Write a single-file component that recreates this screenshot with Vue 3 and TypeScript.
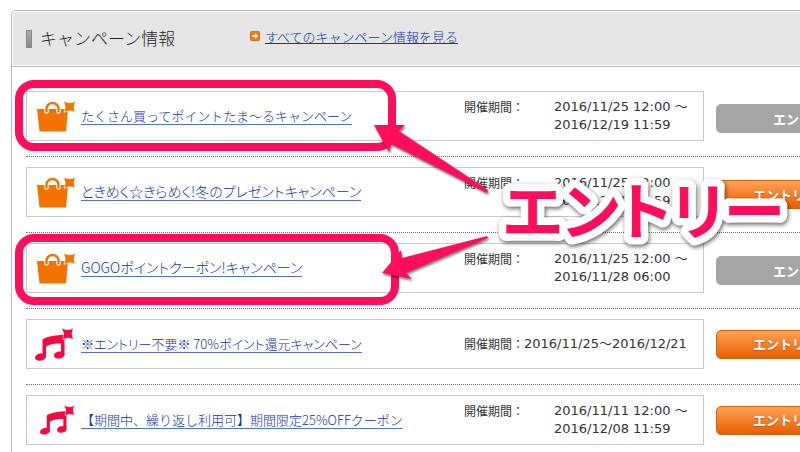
<script setup lang="ts">
type IconKind = 'bag' | 'note' | 'note-small'
type TitleStyle = 'full' | 'tight' | 'tight-large'

interface Campaign {
  id: number
  icon: IconKind
  title: string
  titleStyle: TitleStyle
  period: string[]
  entered: boolean
  lowered: boolean
}

const campaigns: Campaign[] = [
  { id: 1, icon: 'bag', title: 'たくさん買ってポイントたま～るキャンペーン', titleStyle: 'full', period: ['2016/11/25 12:00 ～', '2016/12/19 11:59'], entered: true, lowered: true },
  { id: 2, icon: 'bag', title: 'ときめく☆きらめく!冬のプレゼントキャンペーン', titleStyle: 'tight-large', period: ['2016/11/25 12:00 ～', '2016/12/19 11:59'], entered: false, lowered: true },
  { id: 3, icon: 'bag', title: 'GOGOポイントクーポン!キャンペーン', titleStyle: 'tight-large', period: ['2016/11/25 12:00 ～', '2016/11/28 06:00'], entered: true, lowered: true },
  { id: 4, icon: 'note', title: '※エントリー不要※ 70%ポイント還元キャンペーン', titleStyle: 'tight', period: ['2016/11/25～2016/12/21'], entered: false, lowered: false },
  { id: 5, icon: 'note-small', title: '【期間中、繰り返し利用可】期間限定25%OFFクーポン', titleStyle: 'full', period: ['2016/11/11 12:00 ～', '2016/12/08 11:59'], entered: false, lowered: false },
]
</script>

<template>
  <main class="page">
    <section class="panel">
      <header class="head">
        <span class="marker"></span>
        <h1>キャンペーン情報</h1>
        <a class="all" href="#all">
          <svg class="go" viewBox="0 0 10 10" aria-hidden="true">
            <rect x="0.5" y="0.5" width="9" height="9" rx="1" fill="#ee7c16" stroke="#d8690c" />
            <path d="M2 4.2h3V2.3L8.3 5 5 7.7V5.8H2z" fill="#fff" />
          </svg>
          <span>すべてのキャンペーン情報を見る</span>
        </a>
      </header>

      <ul class="list">
        <li v-for="c in campaigns" :key="c.id" class="row">
          <div class="card">
            <div class="pic">
              <svg v-if="c.icon === 'bag'" class="bag" viewBox="0 0 39 31" aria-hidden="true">
                <path d="M0 8h31l-2 22.500H2.500z" fill="#f27200" />
                <path d="M9.500 10.500V7.500a6 5.500 0 0 1 12 0V10.500" fill="none" stroke="#fff" stroke-width="4.600" stroke-linecap="round" />
                <path d="M9.500 10.500V7.500a6 5.500 0 0 1 12 0V10.500" fill="none" stroke="#f27200" stroke-width="2.400" stroke-linecap="round" />
                <path d="M26.500 0Q33 3.500 39 0Q35.500 5.500 38.500 11.500Q33 8 27 11.500Q29.500 5.500 26.500 0z" fill="#f27200" stroke="#fff" stroke-width="0.700" />
              </svg>
              <svg v-else :class="c.icon" viewBox="0 0 39 33" aria-hidden="true">
                <path d="M7.500 11.500C13 7.500 22 7.500 29.500 6.500V27H26V15.500C20 15.500 15 16 11 18.500V29H7.500z" fill="#f5083f" />
                <ellipse cx="5.500" cy="29" rx="5.500" ry="3.600" transform="rotate(-12 5.500 29)" fill="#f5083f" />
                <ellipse cx="24.300" cy="27" rx="5.300" ry="3.500" transform="rotate(-12 24.300 27)" fill="#f5083f" />
                <path d="M26.500 0Q33 3.500 38.500 0Q35.500 5.500 38.500 11.500Q33 8.500 28 11.500Q30 5.500 26.500 0z" fill="#f5083f" stroke="#fff" stroke-width="0.600" />
              </svg>
            </div>
            <div class="title">
              <a :href="`#campaign-${c.id}`" :class="c.titleStyle">{{ c.title }}</a>
            </div>
            <div class="term">
              <span class="label" :class="{ wide: c.period.length > 1 }">開催期間：</span>
              <span class="dates">
                <span v-for="line in c.period" :key="line">{{ line }}</span>
              </span>
            </div>
          </div>
          <button type="button" class="entry" :class="{ done: c.entered, lowered: c.lowered }">エントリー</button>
        </li>
      </ul>
    </section>

    <svg class="notes" viewBox="0 0 800 452">
      <g fill="none" stroke="#ff0f5b" stroke-width="8">
        <rect x="19" y="84" width="373" height="63" rx="15" />
        <rect x="19" y="238" width="376" height="63" rx="15" />
      </g>
      <g class="arrows" fill="#ff0f5b">
        <path d="M374 125L405 125L399 131L488 190L487 193L391 144L389 152z" />
        <path d="M382 273L401 250L402 258L487 236L488 238L406 273L412 279z" />
      </g>
      <text class="callout" x="503" y="235">エントリー</text>
    </svg>
  </main>
</template>

<style>
body {
  background: #fff;
}
</style>

<style scoped>
.page {
  position: relative;
  height: 100vh;
  overflow: hidden;
  box-sizing: border-box;
  padding: 10px 0 0 11px;
  font-family: "Noto Sans CJK JP", sans-serif;
  color: #333;
}
.panel {
  margin-right: -101px;
  border: 1px solid #bbb;
  border-radius: 5px;
}
.head {
  display: flex;
  align-items: center;
  height: 53px;
  border: 1px solid #fff;
  border-radius: 4px 4px 0 0;
  background: #e5e5e5;
  box-shadow: 0 1px 0 #bbb;
  padding-left: 13px;
}
.marker {
  width: 6px;
  height: 18px;
  box-sizing: border-box;
  border: 1px solid #8a8a8a;
  background: linear-gradient(#aaa, #888);
}
h1 {
  margin: 0 0 2px 8px;
  width: 210px;
  font-size: 17px;
  line-height: 24px;
  font-weight: 300;
  color: #222;
}
.all {
  display: flex;
  gap: 5px;
  margin-bottom: 4px;
  font-size: 13px;
  line-height: 20px;
  font-weight: 300;
  color: #0f33b4;
}
.go {
  width: 10px;
  height: 10px;
  margin-top: 4px;
}
.list {
  list-style: none;
  margin: 0;
  padding: 15px 14px 0;
}
.row {
  display: flex;
  align-items: center;
  gap: 12px;
  padding: 10px 0 15px;
  border-bottom: 1px dotted #777;
}
.card {
  flex: 1;
  display: flex;
  align-items: center;
  box-sizing: border-box;
  height: 50px;
  border: 1px solid #c8c8c8;
}
.pic {
  width: 54px;
  display: flex;
  justify-content: center;
  padding-right: 5px;
  box-sizing: border-box;
}
.pic svg {
  display: block;
}
.bag {
  width: 39px;
  height: 31px;
  margin-left: 9px;
}
.note {
  width: 39px;
  height: 33px;
  margin-left: 6px;
}
.note-small {
  width: 35px;
  height: 30px;
  margin-left: 12px;
}
.title {
  flex: 1;
  display: flex;
}
.title a {
  border-bottom: 1px solid #5670c4;
  font-size: 13px;
  line-height: 17px;
  font-weight: 300;
  color: #0f33b4;
  text-decoration: none;
  white-space: nowrap;
}
.title .tight {
  font-feature-settings: "palt";
}
.title .tight-large {
  font-size: 14px;
  font-feature-settings: "palt";
}
.term {
  display: flex;
  width: 239px;
  line-height: 18px;
}
.label {
  font-size: 12px;
  white-space: nowrap;
}
.wide {
  width: 90px;
}
.dates {
  display: flex;
  flex-direction: column;
  font-family: "DejaVu Sans", "Noto Sans CJK JP", sans-serif;
  font-size: 13px;
  white-space: nowrap;
}
.entry {
  width: 170px;
  height: 29px;
  padding: 0 0 0 36px;
  border: 1px solid #c9650f;
  border-radius: 5px;
  background: linear-gradient(#ffa257, #e85f00);
  color: #fff;
  font-family: inherit;
  font-size: 13px;
  line-height: 18px;
  font-weight: 700;
  text-align: left;
  text-shadow: 0 1px 1px #b85a18;
}
.done {
  padding-left: 56px;
  border-color: #a5a5a5;
  background: #a5a5a5;
  text-shadow: none;
}
.lowered {
  margin-top: 5px;
}
.notes {
  position: absolute;
  top: 0;
  left: 0;
  width: 800px;
  height: 452px;
  pointer-events: none;
}
.arrows {
  filter: drop-shadow(1px 2px 1px rgba(0, 0, 0, 0.5));
}
.callout {
  font-size: 62px;
  font-weight: 700;
  font-feature-settings: "palt";
  fill: #ff0f5b;
  stroke: #fff;
  stroke-width: 15px;
  stroke-linejoin: round;
  paint-order: stroke;
  filter: drop-shadow(1px 2px 2px rgba(0, 0, 0, 0.6));
}
</style>
